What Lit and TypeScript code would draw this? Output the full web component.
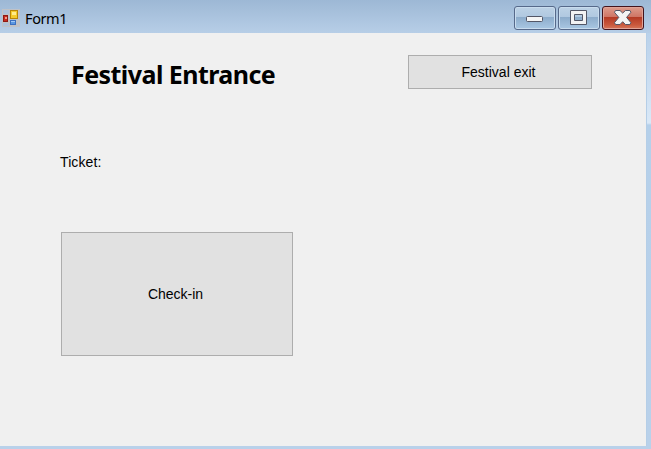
import { LitElement, html, css, svg } from "lit";
import { customElement, property } from "lit/decorators.js";

@customElement("caption-button")
class CaptionButton extends LitElement {
  @property() kind = "minimize";

  static styles = css`
    :host { display: block; width: 42px; height: 24px; }
    .face {
      display: flex; box-sizing: border-box; width: 42px; height: 24px; padding: 0;
      border: 1px solid #56698a; border-radius: 3px;
      box-shadow: inset 0 0 0 1px #c9dcee;
      background: linear-gradient(#bdd2e6 0, #b0c8e0 45%, #8daccb 47%, #a9c7e3 100%);
    }
    .close {
      border-color: #43141d;
      box-shadow: inset 0 0 0 1px #e0a397;
      background: linear-gradient(#dd9c8d 0, #cf7565 45%, #b43a25 47%, #c9573c 80%, #d5765a 100%);
    }
    svg { display: block; width: 40px; height: 22px; }
  `;

  glyph() {
    if (this.kind === "minimize")
      return svg`<rect x="11.5" y="9.5" width="16" height="5" rx="1" fill="#f5f5f5" stroke="#535666"/>`;
    if (this.kind === "maximize")
      return svg`<path fill-rule="evenodd" d="M11.5 3.5h16v14h-16zM15.5 7.5v6h8v-6z" fill="#f2f2f3" stroke="#535666"/>`;
    return svg`<path d="M12.5 3.5h4.5l2.7 2.6 2.7-2.6h4.5l1 1.8-4.3 5.1 4.3 5.2-1 1.9h-4.5l-2.7-2.8-2.7 2.8h-4.5l-1-1.9 4.3-5.2-4.3-5.1z" fill="#f4f4f4" stroke="#535666" stroke-linejoin="round"/>`;
  }

  render() {
    return html`<button class="face ${this.kind}" aria-label=${this.kind}>
      <svg viewBox="0 0 40 22">${this.glyph()}</svg>
    </button>`;
  }
}

@customElement("app-root")
class AppRoot extends LitElement {
  static styles = css`
    :host { display: block; width: 651px; height: 449px; overflow: hidden; }
    .window {
      display: grid; grid-template: 33px 413px 3px / 646px 5px;
      width: 651px; height: 449px; background: #b9d1ea;
    }
    .titlebar {
      grid-column: 1 / 3; display: flex; align-items: flex-start;
      box-sizing: border-box; padding: 6px 7px 0 2px;
      background: linear-gradient(#9db8d5, #b7cee7);
    }
    .app-icon { display: block; width: 18px; height: 18px; margin-top: 3px; }
    .caption {
      flex: 1; margin: 2px 0 0 5px; color: #000; white-space: nowrap;
      font: 14.5px/20px "Noto Sans", sans-serif; letter-spacing: -0.4px;
    }
    .controls { display: flex; gap: 2px; }
    .edge { background: linear-gradient(#b9d1ea 0, #d9e8f7 88px, #d9e8f7 90px, #b5d0ea 92px, #b9d1ea 100%); border-left: 1px solid #b5cee7; }
    .client {
      display: grid; grid-template-columns: 347px 184px;
      grid-template-rows: 85px 92px 124px; align-content: start;
      box-sizing: border-box; padding: 22px 0 0 61px; background: #f0f0f0;
      font: 14px/20px "Liberation Sans", Arial, sans-serif; color: #000;
    }
    .title {
      margin: 3px 0 0 10px; font: bold 25px/32px "Noto Sans", sans-serif;
      white-space: nowrap; letter-spacing: -0.55px;
    }
    .push {
      box-sizing: border-box; padding: 0 3px 1px 0; border: 1px solid #adadad;
      background: #e1e1e1; color: #000; font: inherit;
    }
    .exit { height: 34px; }
    .ticket { grid-column: 1 / 3; margin: 12px 0 0 -1px; letter-spacing: 0.1px; }
    .check { width: 232px; height: 124px; }
  `;

  render() {
    return html`<div class="window">
      <div class="titlebar">
        <svg class="app-icon" viewBox="0 0 18 18">
          <path d="M0 0h18v18H0z" fill="#c0c2c6"/>
          <path d="M1 1h6v4H1zM1 14h6v3H1z" fill="#adc2da"/>
          <rect x="1.5" y="6.5" width="4" height="6" fill="#c92b1d" stroke="#8e1b16"/>
          <path d="M3 8h2v2H3z" fill="#f39a89"/>
          <rect x="8.5" y="1.5" width="7" height="8" fill="#f4cb2c" stroke="#b98508"/>
          <path d="M10 3h4v3h-4z" fill="#ffeb8b"/>
          <rect x="8.5" y="11.5" width="5" height="4" fill="#5a97e2" stroke="#3c70c0"/>
          <path d="M9 12h4v1H9z" fill="#9fc8f6"/>
        </svg>
        <div class="caption">Form1</div>
        <div class="controls">
          <caption-button kind="minimize"></caption-button>
          <caption-button kind="maximize"></caption-button>
          <caption-button kind="close"></caption-button>
        </div>
      </div>
      <main class="client">
        <h1 class="title">Festival Entrance</h1>
        <button class="push exit">Festival exit</button>
        <div class="ticket">Ticket:</div>
        <button class="push check">Check-in</button>
      </main>
      <div class="edge"></div>
    </div>`;
  }
}
